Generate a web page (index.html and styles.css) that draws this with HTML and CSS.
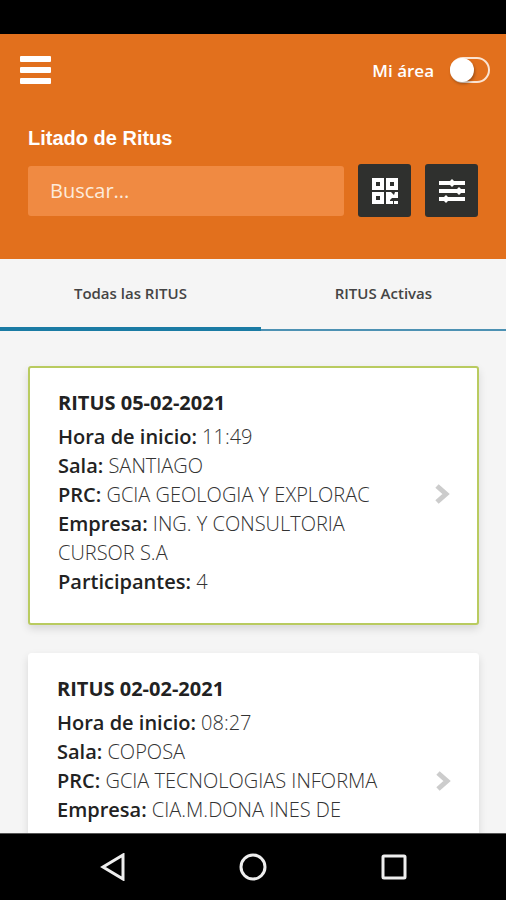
FILE: index.html
```html
<!DOCTYPE html>
<html lang="es">
<head>
<meta charset="utf-8">
<meta name="viewport" content="width=device-width, initial-scale=1">
<title>Ritus</title>
<link rel="stylesheet" href="styles.css">
</head>
<body>
<div class="status-bar"></div>
<header class="header">
  <div class="topbar">
    <button class="menu" type="button" aria-label="Menú">
      <svg width="32" height="28" viewBox="0 0 32 28" fill="#fff"><rect width="31" height="6" rx="1"/><rect y="11" width="31" height="6" rx="1"/><rect y="22" width="31" height="6" rx="1"/></svg>
    </button>
    <label class="area">Mi área <input class="switch" type="checkbox" role="switch"></label>
  </div>
  <h1 class="title">Litado de Ritus</h1>
  <form class="search">
    <input class="search-input" type="text" placeholder="Buscar..." aria-label="Buscar">
    <button class="tool" type="button" aria-label="Escanear código QR">
      <svg width="28" height="28" viewBox="0 0 28 28" fill="#fff"><path fill-rule="evenodd" d="M1 1h12v12H1zM5 5v4h4V5zM15 1h12v12H15zM19 5v4h4V5zM1 15h12v12H1zM5 19v4h4v-4z"/><path d="M15 15h5l3 3 1-3h3v6h-6l-2 2v1h3v3h-7zM23 24h4v3h-4z"/></svg>
    </button>
    <button class="tool" type="button" aria-label="Filtros">
      <svg width="28" height="26" viewBox="0 0 28 26" fill="#fff"><path d="M1 3h11l2-2 2 2h11v4H16l-2 2-2-2H1zM1 11h18l2-2 2 2h4v4h-4l-2 2-2-2H1zM1 19h5l2-2 2 2h17v4H10l-2 2-2-2H1z"/></svg>
    </button>
  </form>
</header>
<nav class="tabs" role="tablist">
  <button class="tab tab-active" type="button" role="tab" aria-selected="true">Todas las RITUS</button>
  <button class="tab" type="button" role="tab" aria-selected="false">RITUS Activas</button>
</nav>
<main class="list">
  <a class="card card-current" href="#ritus-1">
    <div class="details">
      <h2 class="card-title">RITUS 05-02-2021</h2>
      <p><b>Hora de inicio:</b> 11:49</p>
      <p><b>Sala:</b> SANTIAGO</p>
      <p><b>PRC:</b> GCIA GEOLOGIA Y EXPLORAC</p>
      <p><b>Empresa:</b> ING. Y CONSULTORIA CURSOR S.A</p>
      <p><b>Participantes:</b> 4</p>
    </div>
    <svg class="chevron" width="16" height="22" viewBox="0 0 16 22"><path d="M3 3l9 8-9 8"/></svg>
  </a>
  <a class="card" href="#ritus-2">
    <div class="details">
      <h2 class="card-title">RITUS 02-02-2021</h2>
      <p><b>Hora de inicio:</b> 08:27</p>
      <p><b>Sala:</b> COPOSA</p>
      <p><b>PRC:</b> GCIA TECNOLOGIAS INFORMA</p>
      <p><b>Empresa:</b> CIA.M.DONA INES DE</p>
    </div>
    <svg class="chevron" width="16" height="22" viewBox="0 0 16 22"><path d="M3 3l9 8-9 8"/></svg>
  </a>
</main>
<footer class="system-nav">
  <button type="button" aria-label="Atrás"><svg width="28" height="28" viewBox="0 0 28 28"><path d="M25 2v24L5 14z"/></svg></button>
  <button type="button" aria-label="Inicio"><svg width="28" height="28" viewBox="0 0 28 28"><circle cx="14" cy="14" r="12"/></svg></button>
  <button type="button" aria-label="Recientes"><svg width="28" height="28" viewBox="0 0 28 28"><rect x="3" y="3" width="22" height="22" rx="1"/></svg></button>
</footer>
</body>
</html>
```
FILE: styles.css
```css
* { box-sizing: border-box; }

body {
  margin: 0;
  height: 100vh;
  display: flex;
  flex-direction: column;
  overflow: hidden;
  background: #f5f5f5;
  color: #222;
  font-family: "Open Sans", "Noto Sans", sans-serif;
}

button {
  margin: 0;
  padding: 0;
  border: 0;
  background: none;
  font: inherit;
  color: inherit;
}

svg { display: block; }
h1, h2, p { margin: 0; }

.status-bar {
  flex: none;
  height: 34px;
  background: #000;
}

.header {
  flex: none;
  padding: 20px 28px 42px;
  background: #e2701d;
  color: #fff;
}

.topbar {
  display: flex;
  justify-content: space-between;
  align-items: center;
  height: 32px;
  margin: 0 -12px 0 -8px;
}

.area {
  display: flex;
  align-items: center;
  gap: 16px;
  font-size: 17px;
  font-weight: 600;
}

.switch {
  appearance: none;
  display: flex;
  align-items: center;
  width: 40px;
  height: 26px;
  margin: 0;
  border: 2px solid #fbe3d2;
  border-radius: 13px;
}

.switch::before {
  content: "";
  width: 24px;
  height: 24px;
  margin-left: -2px;
  flex: none;
  border-radius: 50%;
  background: #fff;
  box-shadow: 1px 2px 3px rgba(0, 0, 0, 0.3);
}

.title {
  margin: 38px 0 12px;
  font-family: "Liberation Sans", sans-serif;
  font-size: 20px;
  font-weight: 700;
  line-height: 28px;
}

.search {
  display: flex;
  align-items: center;
  gap: 14px;
}

.search-input {
  flex: 1;
  min-width: 0;
  height: 50px;
  padding: 0 22px;
  border: 0;
  border-radius: 3px;
  background: #f08a42;
  color: #fff;
  font: 20px "Open Sans", "Noto Sans", sans-serif;
}

.search-input::placeholder { color: #fdebdc; opacity: 1; }

.tool {
  display: grid;
  place-items: center;
  width: 53px;
  height: 53px;
  border-radius: 3px;
  background: #2f302e;
}

.tabs {
  flex: none;
  display: flex;
  height: 72px;
  box-shadow: inset 0 -2px #4c91b3;
}

.tab {
  flex: 1 1 auto;
  padding-bottom: 2px;
  border-bottom: 2px solid transparent;
  color: #444;
  font-size: 15px;
  font-weight: 600;
}

.tab-active {
  padding-bottom: 0;
  border-bottom: 4px solid #1a7ba4;
}

.list {
  flex: 1;
  min-height: 0;
  overflow: hidden;
  padding: 35px 27px 0 28px;
}

.card {
  display: flex;
  align-items: center;
  justify-content: space-between;
  gap: 40px;
  min-height: 259px;
  margin-bottom: 28px;
  padding: 20px 27px 24px 28px;
  border: 1px solid #fff;
  border-radius: 3px;
  background: #fff;
  box-shadow: 0 4px 8px rgba(0, 0, 0, 0.12);
  color: #333;
  font-size: 20px;
  font-weight: 300;
  line-height: 29px;
  text-decoration: none;
}

.card-current { border: 2px solid #b9cb60; }

.card b { color: #222; font-weight: 600; }

.card-title {
  margin-bottom: 5px;
  color: #222;
  font-size: 20px;
  font-weight: 700;
}

.details {
  flex: 1;
  align-self: flex-start;
}

.chevron {
  flex: none;
  fill: none;
  stroke: #ccc;
  stroke-width: 5;
}

.system-nav {
  flex: none;
  display: flex;
  justify-content: space-between;
  align-items: center;
  height: 67px;
  padding: 0 98px;
  border-top: 1px solid #555;
  background: #000;
}

.system-nav svg {
  fill: none;
  stroke: #eee;
  stroke-width: 3;
}
```
